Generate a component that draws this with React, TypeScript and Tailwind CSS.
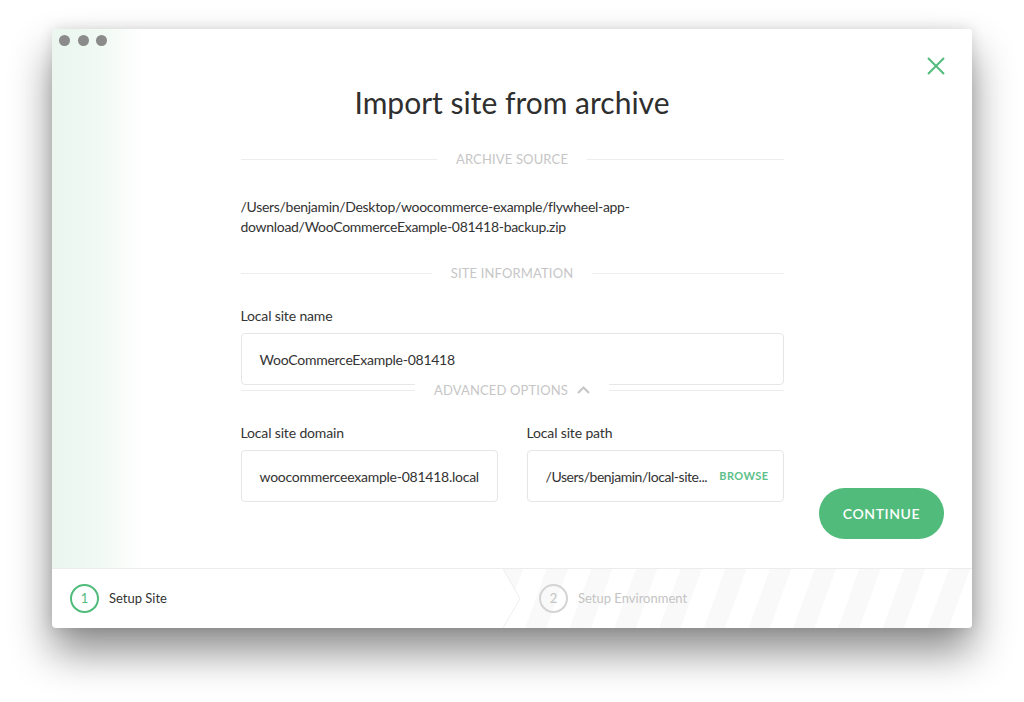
import React from 'react';

const font = { fontFamily: 'Lato, "Open Sans", sans-serif' };

function SectionTitle({ title, className }: { title: string; className?: string }) {
  return (
    <div className={`flex items-center ${className ?? ''}`}>
      <div className="h-px flex-1 bg-[#ededed]" />
      <span className="px-[19px] text-[13px] leading-4 tracking-[0.15px] text-[#c6c6c6] uppercase">
        {title}
      </span>
      <div className="h-px flex-1 bg-[#ededed]" />
    </div>
  );
}

function Field({
  label,
  children,
  className,
  inputClass,
}: {
  label: string;
  children: React.ReactNode;
  className?: string;
  inputClass?: string;
}) {
  return (
    <div className={className}>
      <div className="text-[14px] leading-[18px] tracking-[-0.15px] text-[#333]">{label}</div>
      <div
        className={`mt-[8px] flex h-[52px] items-center whitespace-nowrap rounded-[4px] border border-[#e6e6e6] bg-white pl-[18px] text-[14px] tracking-[-0.25px] text-[#333] ${inputClass ?? 'pr-[18px]'}`}
      >
        {children}
      </div>
    </div>
  );
}

export default function App() {
  return (
    <div className="min-h-[702px] bg-white pl-[52px] pt-[29px]" style={font}>
      <div className="relative flex h-[599px] w-[920px] flex-col overflow-hidden rounded-[4px] bg-white shadow-[0_24px_42px_rgba(0,0,0,0.45),0_0_14px_rgba(0,0,0,0.12)]">
        {/* window chrome */}
        <div className="absolute left-[7px] top-[6px] flex gap-[7.5px]">
          <span className="h-[11px] w-[11px] rounded-full bg-[#8b8b8b]" />
          <span className="h-[11px] w-[11px] rounded-full bg-[#8b8b8b]" />
          <span className="h-[11px] w-[11px] rounded-full bg-[#8b8b8b]" />
        </div>
        <button className="absolute right-[27px] top-[28px] text-[#51bb7b]">
          <svg width="18" height="18" viewBox="0 0 18 18" fill="none" stroke="currentColor" strokeWidth="2">
            <path d="M1 1L17 17M17 1L1 17" />
          </svg>
        </button>

        {/* main */}
        <div className="flex min-h-0 flex-1 flex-col bg-[linear-gradient(90deg,#eaf6ef_0px,#f0f9f3_45px,#ffffff_92px)] pb-[28px] pt-[55px]">
          <div className="mx-auto w-[543px]">
            <h1 className="text-center text-[30px] leading-9 text-[#2f2f2f]">Import site from archive</h1>

            <SectionTitle title="Archive Source" className="mt-[31px]" />

            <p className="mt-[30px] text-[14px] leading-5 tracking-[-0.3px] text-[#333]">
              /Users/benjamin/Desktop/woocommerce-example/flywheel-app-
              <br />
              download/WooCommerceExample-081418-backup.zip
            </p>

            <SectionTitle title="Site Information" className="mt-[28px]" />

            <Field label="Local site name" className="mt-[26px]">
              WooCommerceExample-081418
            </Field>

            <div className="relative -mt-[3px] flex items-center">
              <div className="h-px flex-1 bg-[#ededed]" />
              <span className="flex items-center gap-[9px] bg-white px-[19px] text-[13px] leading-4 tracking-[0.15px] text-[#c6c6c6] uppercase">
                Advanced Options
                <svg width="13" height="8" viewBox="0 0 13 8" fill="none" stroke="#c6c6c6" strokeWidth="2">
                  <path d="M1 7L6.5 1.5L12 7" />
                </svg>
              </span>
              <div className="h-px flex-1 bg-[#ededed]" />
            </div>

            <div className="mt-[26px] flex gap-[29px]">
              <Field label="Local site domain" className="w-[257px]">
                woocommerceexample-081418.local
              </Field>
              <Field label="Local site path" className="w-[257px]" inputClass="pr-[14px]">
                <span className="flex-1 tracking-[-0.45px]">/Users/benjamin/local-site...</span>
                <span className="ml-[7px] shrink-0 text-[11px] font-bold tracking-[0.4px] text-[#5cc08a]">BROWSE</span>
              </Field>
            </div>
          </div>

          <div className="-mt-[14px] flex justify-end pr-[28px]">
            <button className="h-[51px] w-[125px] rounded-full bg-[#51bb7b] text-[14px] font-semibold tracking-[0.6px] text-white">
              CONTINUE
            </button>
          </div>
        </div>

        {/* footer steps */}
        <div className="flex h-[60px] shrink-0 border-t border-[#ececec]">
          <div className="flex w-[451px] items-center gap-[10px] pl-[18px]">
            <span className="flex h-[29px] w-[29px] items-center justify-center rounded-full border-2 border-[#51bb7b] text-[13px] text-[#51bb7b]">
              1
            </span>
            <span className="text-[13px] text-[#333]">Setup Site</span>
          </div>
          <div className="flex flex-1 items-center bg-[repeating-linear-gradient(-70deg,#ffffff_0px,#ffffff_22px,#f9f9f9_22px,#f9f9f9_42px)]">
            <svg width="18" height="59" viewBox="0 0 18 59" className="h-full shrink-0">
              <path d="M0 0L17 29.5L0 59Z" fill="#ffffff" />
              <path d="M0 0L17 29.5L0 59" fill="none" stroke="#efefef" strokeWidth="1" />
            </svg>
            <div className="ml-[18px] flex items-center gap-[10px]">
              <span className="flex h-[29px] w-[29px] items-center justify-center rounded-full border-2 border-[#d4d4d4] text-[13px] text-[#c4c4c4]">
                2
              </span>
              <span className="text-[13px] text-[#c4c4c4]">Setup Environment</span>
            </div>
          </div>
        </div>
      </div>
    </div>
  );
}
